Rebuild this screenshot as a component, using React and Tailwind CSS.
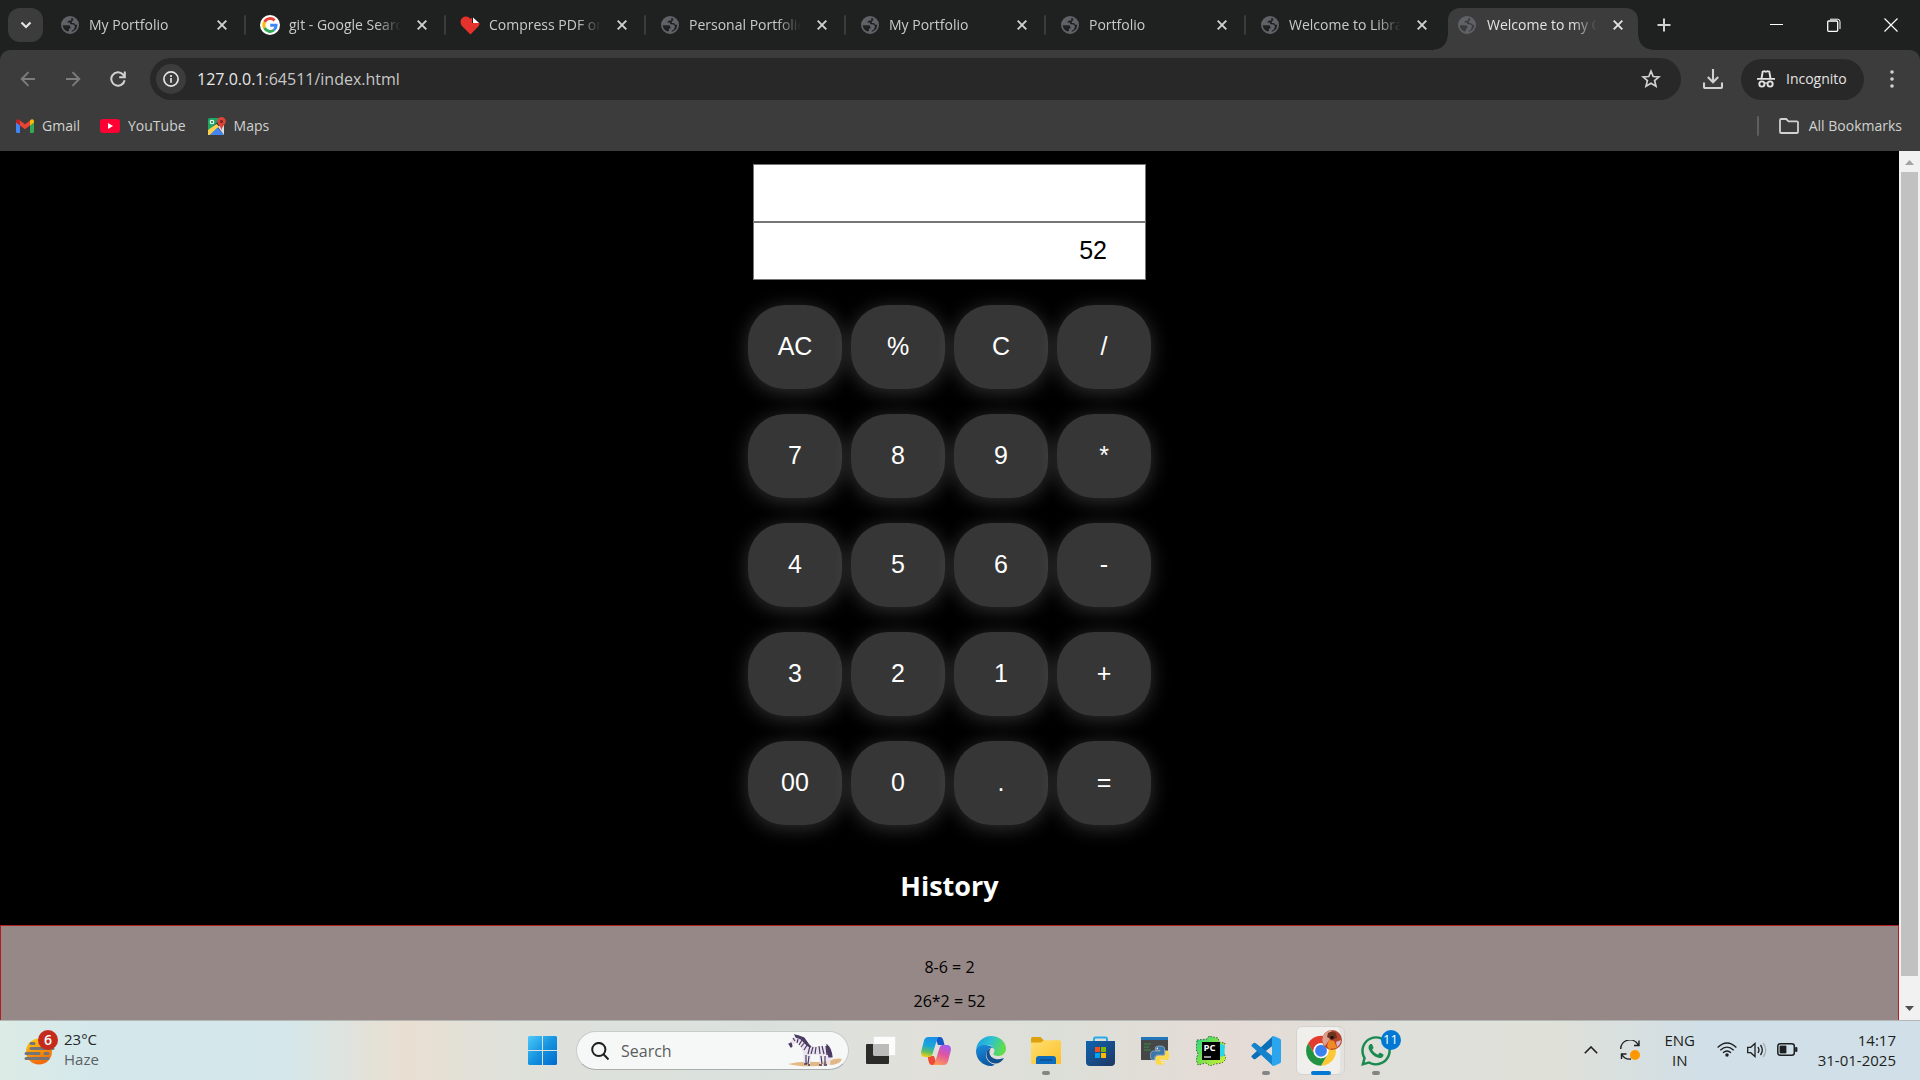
import React, { useState } from "react";
import { FaWhatsapp } from "react-icons/fa";

function Globe() {
  return (
    <svg viewBox="0 0 18 18" className="size-[18px] shrink-0" aria-hidden="true">
      <circle cx="9" cy="9" r="8.1" fill="none" stroke="#5f6368" strokeWidth="1.8" />
      <path d="M9.500 1C5 .6 1.200 4 1 8.500l1.500.7h4.800c1.500 0 2.200.9 2.200 2.200v1.200h-1.500v2l-1.500 1.200 2.500 1.500h2l-.3-2.500 2-1 .8-2 .7-1.300-1.600-2-3.100-.3-.8-1.700H6.500V5.700L8 4.500h2l.5-2z" fill="#5f6368" />
      <path d="M12.500 2l-.4 2.500-1.500 1 .5 1.600 2.200.2 1 1.500H17C17 5.500 15.200 3 12.500 2z" fill="#5f6368" />
    </svg>
  );
}

function Google() {
  return (
    <svg viewBox="0 0 20 20" className="size-5 shrink-0" aria-hidden="true">
      <circle cx="10" cy="10" r="10" fill="#fff" />
      <g fill="none" strokeWidth="2.9">
        <path d="M14.6 5.400A6.200 6.200 0 0 0 4.600 7" stroke="#ea4335" />
        <path d="M4.600 7a6.200 6.200 0 0 0 0 6" stroke="#fbbc05" />
        <path d="M4.600 13a6.200 6.200 0 0 0 9.500 2" stroke="#34a853" />
        <path d="M14.100 15a6.200 6.200 0 0 0 2-4.800H10.200" stroke="#4285f4" />
      </g>
    </svg>
  );
}

function PdfHeart() {
  return (
    <svg viewBox="0 0 20 20" className="size-5 shrink-0" aria-hidden="true">
      <path d="M10.500 19.500L2 11C-.8 7.700.6 2.200 5 1.500c2.600-.4 4.500.8 5.500 2.500L12 2.500V8h7.500c.2 1.300-.3 2.300-1 3.200z" fill="#e5322d" />
      <path d="M13 2.500l6 5.500h-6z" fill="#fff" />
    </svg>
  );
}

function Gmail() {
  return (
    <svg viewBox="0 0 18 14" className="h-[14px] w-[18px]" aria-hidden="true">
      <path d="M0 3v9.500C0 13.400.6 14 1.400 14H4V6z" fill="#4285f4" />
      <path d="M18 3v9.500c0 .9-.6 1.500-1.400 1.500H14V6z" fill="#34a853" />
      <path d="M4 1.500l5 3.800 5-3.800v5L9 10.200 4 6.500z" fill="#ea4335" />
      <path d="M0 2.200C0 .2 2-.5 3.300.8L4 1.500v5L0 3.600z" fill="#c5221f" />
      <path d="M18 2.200c0-2-2-2.700-3.300-1.400l-.7.700v5l4-2.900z" fill="#fbbc04" />
    </svg>
  );
}

function YouTube() {
  return (
    <svg viewBox="0 0 20 14" className="h-[14px] w-5" aria-hidden="true">
      <rect width="20" height="14" rx="3.2" fill="#ff0033" />
      <path d="M8 4l5 3-5 3z" fill="#fff" />
    </svg>
  );
}

function Maps() {
  return (
    <svg viewBox="0 0 18 18" className="size-[18px]" aria-hidden="true">
      <path d="M0 2.500Q0 1 1.500 1H13L0 15z" fill="#1fa463" />
      <path d="M0 13L8.500 7l2.500 2.500L2 18H0z" fill="#ffd04b" />
      <path d="M2 18l7.500-7.500L16 18z" fill="#4285f4" />
      <path d="M10 10l5-4 1 1v11z" fill="#dadce0" />
      <path d="M13.500 0a4.300 4.300 0 0 1 4.300 4.300c0 3.200-3.300 4.200-4 8.200h-.6c-.7-4-4-5-4-8.200A4.300 4.300 0 0 1 13.500 0z" fill="#db4437" />
      <circle cx="13.5" cy="4.4" r="1.5" fill="#7b231e" />
      <circle cx="4" cy="5" r="1.8" fill="none" stroke="#fff" strokeWidth="1.1" />
    </svg>
  );
}

const tabs = [
  { title: "My Portfolio", Icon: Globe },
  { title: "git - Google Search", Icon: Google },
  { title: "Compress PDF online", Icon: PdfHeart },
  { title: "Personal Portfolio", Icon: Globe },
  { title: "My Portfolio", Icon: Globe },
  { title: "Portfolio", Icon: Globe },
  { title: "Welcome to Library", Icon: Globe },
];

function Cross() {
  return (
    <svg viewBox="0 0 10 10" className="size-[10px]" fill="none" stroke="currentColor" strokeWidth="1.9" aria-hidden="true">
      <path d="M.7.700l8.600 8.600M9.300.700L.7 9.300" />
    </svg>
  );
}

const fade = "[mask-image:linear-gradient(to_right,black_calc(100%_-_24px),transparent)]";

function Tab({ title, Icon, divider }) {
  return (
    <div className="flex h-[34px] w-[200px] min-w-0 items-center pl-[13px]">
      <div className="flex w-5 shrink-0 justify-center">
        <Icon />
      </div>
      <span className={`ml-[9px] flex-1 overflow-hidden whitespace-nowrap text-sm text-[#c9cbc9] ${fade}`}>{title}</span>
      <button aria-label={`Close ${title}`} className="flex w-[43px] shrink-0 justify-center pr-px text-[#d0d2d0]">
        <Cross />
      </button>
      <span className={`mr-px h-5 w-[2px] shrink-0 rounded ${divider ? "bg-[#3c3c3c]" : "bg-transparent"}`} />
    </div>
  );
}

function TabStrip() {
  return (
    <header className="flex h-[50px] shrink-0 items-end bg-[#1f2120]">
      <button aria-label="Search tabs" className="mr-1 mb-2 ml-2 flex h-[34px] w-[35px] shrink-0 items-center justify-center rounded-xl bg-[#3c3c3c]">
        <svg viewBox="0 0 12 8" className="h-2 w-3" fill="none" stroke="#e3e3e3" strokeWidth="2.2" aria-hidden="true">
          <path d="M1.500 1.500L6 6l4.500-4.500" />
        </svg>
      </button>
      <nav className="flex min-w-0 items-end" aria-label="Tabs">
        {tabs.map((t, i) => (
          <div key={i} className="mb-2 min-w-0">
            <Tab {...t} divider={i < tabs.length - 1} />
          </div>
        ))}
        <div className="relative ml-px flex h-[42px] w-[190px] shrink-0 items-center rounded-t-xl bg-[#3c3c3c] pb-2 pl-[10px]">
          <span className="absolute bottom-0 -left-[14px] size-[14px] bg-[radial-gradient(circle_at_0_0,#1f2120_13px,#3c3c3c_14px)]" />
          <span className="absolute -right-[14px] bottom-0 size-[14px] bg-[radial-gradient(circle_at_100%_0,#1f2120_13px,#3c3c3c_14px)]" />
          <Globe />
          <span className={`ml-[11px] flex-1 overflow-hidden whitespace-nowrap text-sm text-[#e3e3e3] ${fade}`}>Welcome to my Calculator</span>
          <button aria-label="Close Welcome to my Calculator" className="flex w-[41px] shrink-0 justify-center text-[#e3e3e3]">
            <Cross />
          </button>
        </div>
      </nav>
      <button aria-label="New tab" className="mb-2 ml-[9px] flex size-[34px] shrink-0 items-center justify-center">
        <svg viewBox="0 0 14 14" className="size-[14px]" stroke="#d0d2d0" strokeWidth="2" aria-hidden="true">
          <path d="M7 .5v13M.5 7h13" />
        </svg>
      </button>
      <div className="ml-auto flex h-[50px] shrink-0 pr-px text-white">
        <button aria-label="Minimize" className="flex w-[57px] items-center justify-center pb-[2px]">
          <svg viewBox="0 0 13 13" className="size-[13px]" stroke="currentColor" aria-hidden="true">
            <path d="M0 6.500h13" />
          </svg>
        </button>
        <button aria-label="Restore" className="flex w-[57px] items-center justify-center">
          <svg viewBox="0 0 14 14" className="size-[14px]" fill="none" stroke="currentColor" aria-hidden="true">
            <rect x=".7" y="3" width="10" height="10.3" rx="1" strokeWidth="1.3" />
            <path d="M3 1.200h7.500a2.500 2.500 0 0 1 2.500 2.500V11" />
          </svg>
        </button>
        <button aria-label="Close window" className="flex w-[57px] items-center justify-center">
          <svg viewBox="0 0 14 14" className="size-[14px]" stroke="currentColor" strokeWidth="1.2" aria-hidden="true">
            <path d="M.5.500l13 13M13.500.500l-13 13" />
          </svg>
        </button>
      </div>
    </header>
  );
}

function Arrow({ flip }) {
  return (
    <svg viewBox="0 0 16 16" className={`size-4 ${flip ? "rotate-180" : ""}`} fill="none" stroke="#7c7c7c" strokeWidth="1.9" aria-hidden="true">
      <path d="M15 8H2M8.500 1.200L1.700 8l6.800 6.800" />
    </svg>
  );
}

function Toolbar() {
  return (
    <div className="shrink-0 bg-[#1f2120]">
      <div className="rounded-t-[10px] bg-[#3c3c3c] pt-2">
        <div className="flex h-[42px] items-center">
          <div className="flex w-[150px] shrink-0 pl-[5px]">
            <button aria-label="Back" className="flex w-[45px] justify-center"><Arrow /></button>
            <button aria-label="Forward" className="flex w-[45px] justify-center"><Arrow flip /></button>
            <button aria-label="Reload" className="flex w-[45px] justify-center">
              <svg viewBox="0 0 16 16" className="size-4" fill="none" stroke="#d0d2d0" strokeWidth="2" aria-hidden="true">
                <path d="M14.600 9.200A6.700 6.700 0 1 1 13 3.500l1.500 2" />
                <path d="M14.800.500v5.800H9.200" />
              </svg>
            </button>
          </div>
          <div className="flex h-[42px] flex-1 items-center rounded-full bg-[#282828] pr-5 pl-[6px]">
            <button aria-label="Site information" className="flex size-[30px] shrink-0 items-center justify-center rounded-full bg-[#3c3c3c]">
              <svg viewBox="0 0 16 16" className="size-4" fill="none" stroke="#e3e3e3" strokeWidth="1.7" aria-hidden="true">
                <circle cx="8" cy="8" r="7.1" />
                <path d="M8 7v4.800M8 4v1.900" />
              </svg>
            </button>
            <a href="#" aria-label="Address" className="ml-[11px] flex-1 text-base text-[#c7c7c7]">
              <span className="text-[#e8e8e8]">127.0.0.1</span>:64511/index.html
            </a>
            <button aria-label="Bookmark this tab">
              <svg viewBox="0 0 20 20" className="size-5" fill="none" stroke="#d0d2d0" strokeWidth="1.7" aria-hidden="true">
                <path d="M10 2.200l2.200 5.300 5.800.4-4.400 3.700 1.400 5.700-5-3.100-5 3.100 1.400-5.700L2 7.900l5.800-.4z" />
              </svg>
            </button>
          </div>
          <button aria-label="Downloads" className="ml-[22px]">
            <svg viewBox="0 0 20 20" className="size-5" fill="none" stroke="#d0d2d0" strokeWidth="2.1" aria-hidden="true">
              <path d="M10 0v13M4.800 8l5.200 5.200L15.200 8M1 13.500v4.300Q1 19 2.200 19h15.600q1.200 0 1.200-1.200v-4.300" />
            </svg>
          </button>
          <button className="ml-[18px] flex h-[41px] w-[123px] items-center rounded-full bg-[#282828] pl-4 text-sm text-[#e3e3e3]">
            <svg viewBox="0 0 18 18" className="size-[18px]" fill="none" stroke="currentColor" strokeWidth="1.9" aria-hidden="true">
              <path d="M4.500 8.500L5.700 1.700l1.700-.5 1.600.6 1.600-.6 1.700.5 1.200 6.800M0 8.900h18" />
              <circle cx="4.9" cy="14" r="2.6" />
              <circle cx="13.1" cy="14" r="2.6" />
              <path d="M7.500 13.300Q9 12.300 10.500 13.300" strokeWidth="1.3" />
            </svg>
            <span className="ml-[11px]">Incognito</span>
          </button>
          <button aria-label="Menu" className="flex w-14 justify-center">
            <svg viewBox="0 0 4 18" className="h-[18px] w-1" fill="#d0d2d0" aria-hidden="true">
              <circle cx="2" cy="2" r="1.8" /><circle cx="2" cy="9" r="1.8" /><circle cx="2" cy="16" r="1.8" />
            </svg>
          </button>
        </div>
        <div className="flex h-[51px] items-center pr-[18px] pl-4 text-sm text-[#d0d2d0]">
          <a href="#" className="flex items-center gap-2"><Gmail />Gmail</a>
          <a href="#" className="ml-5 flex items-center gap-2"><YouTube />YouTube</a>
          <a href="#" className="ml-[22px] flex items-center gap-2"><Maps />Maps</a>
          <span className="ml-auto h-5 w-[2px] rounded bg-[#5e5e5e]" />
          <button className="ml-5 flex items-center gap-[10px]">
            <svg viewBox="0 0 20 16" className="h-4 w-5" fill="none" stroke="currentColor" strokeWidth="1.8" aria-hidden="true">
              <path d="M1 2.200Q1 1 2.200 1h5L9.500 3.300h8.300q1.200 0 1.200 1.200v9.200q0 1.300-1.200 1.300H2.200Q1 15 1 13.700z" />
            </svg>
            All Bookmarks
          </button>
        </div>
      </div>
    </div>
  );
}

const keys = ["AC", "%", "C", "/", "7", "8", "9", "*", "4", "5", "6", "-", "3", "2", "1", "+", "00", "0", ".", "="];
const sans = "font-['Liberation_Sans',Arial,sans-serif]";

function Calculator() {
  const [expression, setExpression] = useState("");
  const [result, setResult] = useState("52");
  const field = `h-[58px] w-[393px] border border-[#767676] bg-white px-[38px] pb-[2px] text-right text-[25px] text-black outline-none ${sans}`;
  return (
    <main className="flex min-w-0 flex-1 flex-col items-center overflow-hidden bg-black pt-[13px]">
      <input aria-label="Expression" className={field} value={expression} onChange={(e) => setExpression(e.target.value)} />
      <input aria-label="Result" className={field} value={result} onChange={(e) => setResult(e.target.value)} />
      <div className="mt-[25px] grid grid-cols-4 gap-x-[9px] gap-y-[25px]">
        {keys.map((k) => (
          <button
            key={k}
            className={`h-[84px] w-[94px] rounded-[37px] bg-[#363636] text-[25px] text-white shadow-[0_3px_20px_rgba(255,255,255,0.2)] ${sans}`}
          >
            {k}
          </button>
        ))}
      </div>
      <h2 className="mt-[43px] text-[27px] leading-9 font-bold text-white">History</h2>
      <section className="mt-[21px] min-h-0 w-full flex-1 border border-b-0 border-[#b01e23] bg-[#968886] pt-6 text-center text-base leading-[34px] text-black">
        <p>8-6 = 2</p>
        <p>26*2 = 52</p>
      </section>
    </main>
  );
}

function Scrollbar() {
  return (
    <div className="flex w-[21px] shrink-0 flex-col items-center bg-[#f1f1f1]" aria-hidden="true">
      <svg viewBox="0 0 21 21" className="size-[21px] shrink-0"><path d="M6 14l4.500-5 4.500 5z" fill="#a3a3a3" /></svg>
      <div className="w-[17px] flex-[804] bg-[#c1c1c1]" />
      <div className="flex-[23]" />
      <svg viewBox="0 0 21 21" className="size-[21px] shrink-0"><path d="M6 7l4.500 5L15 7z" fill="#505050" /></svg>
    </div>
  );
}

function WeatherIcon() {
  return (
    <svg viewBox="0 0 36 38" className="h-[38px] w-9" aria-hidden="true">
      <defs>
        <linearGradient id="sun" x1="0" y1="0" x2="0.4" y2="1"><stop stopColor="#fcd116" /><stop offset="1" stopColor="#f26a0c" /></linearGradient>
      </defs>
      <circle cx="15" cy="21.5" r="13" fill="url(#sun)" />
      <g stroke="#757575" strokeWidth="3" strokeLinecap="round"><path d="M7 13.500h3M7 18.500h22M2 23.500h13M21 23.500h3M2 28.500h22" /></g>
      <circle cx="24" cy="10" r="10" fill="#c42b1c" />
      <text x="24" y="15" textAnchor="middle" fill="#fff" fontSize="14" fontWeight="600">6</text>
    </svg>
  );
}

function Zebra() {
  return (
    <svg viewBox="0 0 54 34" className="h-[34px] w-[54px]" aria-hidden="true">
      <path d="M0 30q12-3 28-2 10 .5 18-3 6-1 8 0-2 6-14 6-24 3-40-1z" fill="#e2b986" />
      <path d="M1 10l5-7 2-2 3 2 4 1 7 8 8 1 9-1 4 4v6l-1 9h-3l-1-9-2-2-1 11h-3l-1-10-8-1-1 10h-2l-1-9-1 10h-2l-1-13-3-6-3-5-3 3-3 2z" fill="#e9e4ee" />
      <path d="M7 1l4 1 5 2 5 7 2 2-3-1-7-7-5-2zM39 11q4 3 5 12l-3 0-2-8zM1 10l2 3 1-1-1-3zM10 5l-1 4M14 6l-3 5M17 8l-4 5M19 11l-3 5M22 12l-2 8M25 13l-2 7M28 13l-1 7M31 12l1 8M34 12l2 8M38 12l1 9M18 21v9M21 22l-1 8M33 22l1 8M37 22v8M5 4l2 3" stroke="#4b3c63" strokeWidth="1.2" fill="#4b3c63" />
      <path d="M16 30h3M20 31h2M31 31h3M36 31h3" stroke="#473a58" strokeWidth="1.6" />
    </svg>
  );
}

function StartLogo() {
  return (
    <svg viewBox="0 0 29 29" className="size-[29px]" aria-hidden="true">
      <defs><linearGradient id="win" x2="1" y2="1"><stop stopColor="#4cc9fb" /><stop offset=".5" stopColor="#1593df" /><stop offset="1" stopColor="#0069cf" /></linearGradient></defs>
      <path d="M1 0h13v14H0V1zM15 0h13l1 1v13H15zM0 15h14v14H1l-1-1zM15 15h14v13l-1 1H15z" fill="url(#win)" />
    </svg>
  );
}

function TaskView() {
  return (
    <svg viewBox="0 0 30 29" className="h-[29px] w-[30px]" aria-hidden="true">
      <rect y="8" width="23" height="20" rx="1" fill="#2b2b2a" />
      <rect x="7.5" y=".5" width="22" height="19" rx="1" fill="#fff" fillOpacity=".88" stroke="#ddd" strokeWidth=".6" />
      <path d="M7.500 8H23v11.500H7.500z" fill="#bbb" />
    </svg>
  );
}

function Copilot() {
  return (
    <svg viewBox="0 0 30 28" className="h-7 w-[30px]" aria-hidden="true">
      <defs>
        <linearGradient id="cpa" x1=".5" x2=".3" y2="1"><stop stopColor="#1a8fe8" /><stop offset=".45" stopColor="#19a8d8" /><stop offset=".75" stopColor="#5fbf62" /><stop offset="1" stopColor="#f2cf18" /></linearGradient>
        <linearGradient id="cpb" x1=".7" x2=".3" y2="1"><stop stopColor="#a65bf0" /><stop offset=".45" stopColor="#e0559f" /><stop offset="1" stopColor="#ff9a5a" /></linearGradient>
      </defs>
      <path d="M14 0h5c2 0 2.700 1.500 3.300 3.300L23.500 8H17z" fill="#1458c5" />
      <path d="M16 28h-5c-2 0-2.700-1.500-3.300-3.300L6.500 19H13z" fill="#ee4a35" />
      <path d="M7.500 0H19c-2 0-2.600 1.500-3.200 3.300L11.500 17c-.6 1.800-1.400 3-3.300 3H4C.8 20-.4 17.500.2 14.500L3 3.600C3.700 1.300 5 0 7.500 0z" fill="url(#cpa)" />
      <path d="M22.500 28H11c2 0 2.600-1.500 3.200-3.300L18.500 11c.6-1.800 1.400-3 3.300-3H26c3.200 0 4.400 2.500 3.800 5.500L27 24.400c-.7 2.300-2 3.600-4.500 3.600z" fill="url(#cpb)" />
    </svg>
  );
}

function Edge() {
  return (
    <svg viewBox="0 0 30 30" className="size-[30px]" aria-hidden="true">
      <defs>
        <linearGradient id="eda" x1="0" x2="1" y2=".3"><stop stopColor="#1a9be0" /><stop offset=".5" stopColor="#2bc0d5" /><stop offset="1" stopColor="#5fdc4e" /></linearGradient>
        <linearGradient id="edb" x2=".3" y2="1"><stop stopColor="#1a8fdc" /><stop offset="1" stopColor="#0c59a4" /></linearGradient>
      </defs>
      <path d="M.2 13C1.200 5.500 7.500 0 15 0c8.500 0 15 6 15 12.500 0 4.500-3.500 7.500-7.500 7.500-3.500 0-5.500-1.200-5-2.500.5-1 1-1.500 1-3 0-3-3-5.500-6.500-5.500C6 9 1.500 11.500.2 13z" fill="url(#eda)" />
      <path d="M0 15c0-4 5-6.500 9.500-6 5 .3 9 2.500 9 5.500 0-2-2-3-4-2.500-3 1-4.500 4-4.500 7 0 5 4 9 9 9.500-1.300.900-2.500 1.500-4 1.500C6.700 30 0 23.300 0 15z" fill="url(#edb)" />
      <path d="M10.500 16c-1 7 4 11.500 9 11.500 3.500 0 6-2 8-4.500.4-.6-.1-1-.7-.7-6 2.700-12.800-.3-13.300-5.300-.2-2 .5-3.500 1.500-4.700-2.500.5-4 2-4.500 3.700z" fill="#124f8f" />
    </svg>
  );
}

function Folder() {
  return (
    <svg viewBox="0 0 30 27" className="h-[27px] w-[30px]" aria-hidden="true">
      <defs><linearGradient id="fol" x2="1" y2="1"><stop stopColor="#ffdf70" /><stop offset="1" stopColor="#fdc02a" /></linearGradient></defs>
      <path d="M0 1.500Q0 0 1.500 0h8l3.500 3.500V8H0z" fill="#dda10b" />
      <path d="M0 5.500h10l3-2.300h15.500q1.500 0 1.500 1.500V27H1.500Q0 27 0 25.500z" fill="url(#fol)" />
      <path d="M5 22q0-3 3-3h14q3 0 3 3v5H5z" fill="#0f6cbd" />
      <path d="M9 23h12" stroke="#0a4a86" strokeWidth="1.3" />
    </svg>
  );
}

function Store() {
  return (
    <svg viewBox="0 0 29 30" className="h-[30px] w-[29px]" aria-hidden="true">
      <defs><linearGradient id="sto" x2="1" y2="1"><stop stopColor="#0f64b0" /><stop offset="1" stopColor="#1e3762" /></linearGradient></defs>
      <path d="M8 7V3q0-1.500 1.500-1.500h10Q21 1.500 21 3v4" fill="none" stroke="#29a9ea" strokeWidth="2" />
      <path d="M0 5h29v21q0 4-4 4H4q-4 0-4-4z" fill="url(#sto)" />
      <path d="M9 11h5v5H9z" fill="#f25022" /><path d="M15 11h5v5h-5z" fill="#7fba00" />
      <path d="M9 17h5v5H9z" fill="#00a4ef" /><path d="M15 17h5v5h-5z" fill="#ffb900" />
    </svg>
  );
}

const snake =
  "M14.250.180l.9.200.73.260.59.300.45.320.34.340.25.340.16.330.1.300.04.260.02.200-.01.130V8.500l-.05.630-.13.550-.21.460-.26.380-.3.310-.33.250-.35.190-.35.140-.33.100-.3.070-.26.040-.21.020H8.770l-.69.050-.59.140-.5.220-.41.270-.33.320-.27.350-.2.360-.15.370-.1.350-.07.320-.04.270-.02.210v3.060H3.170l-.21-.030-.28-.070-.32-.120-.35-.180-.36-.260-.36-.360-.35-.460-.32-.590-.28-.730-.21-.880-.14-1.050-.05-1.230.06-1.220.16-1.040.24-.870.32-.710.36-.570.4-.440.42-.330.42-.240.4-.160.36-.100.32-.050.24-.010h.160l.06.010h8.160v-.830H6.180l-.01-2.750-.02-.370.05-.340.11-.310.17-.280.25-.260.31-.230.38-.200.44-.180.51-.150.58-.120.64-.100.71-.060.77-.040.84-.020 1.270.050z";

function Python() {
  return (
    <svg viewBox="0 0 29 29" className="size-[29px]" aria-hidden="true">
      <path d="M0 1h27v23H0z" fill="#454748" />
      <path d="M0 1h27v3H0z" fill="#2076b8" />
      <path d="M3 8h7M3 11h5M3 14h7" stroke="#3c8c44" />
      <g transform="translate(9.5 10) scale(.79)">
        <path d={snake} fill="#3a78ab" stroke="#e6e6e6" strokeWidth=".6" />
        <path d={snake} transform="rotate(180 12 12)" fill="#fbd94c" stroke="#e6e6e6" strokeWidth=".6" />
        <circle cx="8.6" cy="3" r="1" fill="#fff" /><circle cx="15.4" cy="21" r="1" fill="#fff" />
      </g>
    </svg>
  );
}

function PyCharm() {
  return (
    <svg viewBox="0 0 30 30" className="size-[30px]" aria-hidden="true">
      <defs><linearGradient id="pyc" x2="1" y2=".8"><stop stopColor="#21d789" /><stop offset=".5" stopColor="#7be04a" /><stop offset="1" stopColor="#c8f03c" /></linearGradient></defs>
      <path d="M1 4l10-1 2-3 9 2 1 4 6 1-2 7 3 9-4 4-7 1-5 2-4-3-8 2-2-6 2-5-2-5z" fill="url(#pyc)" stroke="#24402a" strokeWidth=".8" strokeDasharray="1.5 1.5" />
      <path d="M23 7l6 3-1 10-5 1z" fill="#24d6e8" />
      <path d="M6 6h18v18H6z" />
      <text x="7.5" y="15" fill="#fff" fontSize="9.5" fontWeight="700">PC</text>
      <path d="M8 21h7" stroke="#fff" strokeWidth="1.2" />
    </svg>
  );
}

function VsCode() {
  return (
    <svg viewBox="0 0 30 30" className="size-[30px]" aria-hidden="true">
      <path d="M22 0L1 19.500q-1.200 1 0 2l1.700 1.500q.9.700 1.800 0L22 9.500z" fill="#0b6fb8" />
      <path d="M22 30L1 10.500q-1.200-1 0-2L2.700 7q.9-.7 1.800 0L22 20.500z" fill="#1583cc" />
      <path d="M22 .200Q23 0 24 .400l5 2.400q1 .5 1 1.700v21q0 1.200-1 1.700l-5 2.400q-1 .4-2 .2-1-.5-1-2V2.200q0-1.500 1-2z" fill="#2ba5ee" />
    </svg>
  );
}

function Chrome() {
  const blade = "M4.950 13A22 22 0 0 1 43.050 13H24A11 11 0 0 0 14.470 29.500Z";
  return (
    <svg viewBox="0 0 36 36" className="size-9" aria-hidden="true">
      <g transform="translate(-1.3 4.4) scale(.68)">
        <path d={blade} fill="#e33b2e" />
        <path d={blade} fill="#fcc934" transform="rotate(120 24 24)" />
        <path d={blade} fill="#229342" transform="rotate(240 24 24)" />
        <circle cx="24" cy="24" r="11" fill="#fff" />
        <circle cx="24" cy="24" r="8.7" fill="#3b82f0" />
      </g>
      <circle cx="26" cy="10" r="10" fill="#b5452f" />
      <path d="M17 6q3-5 9-6l-2 9-5 7q-4-4-2-10z" fill="#dca08d" />
      <path d="M22 3q4-3 8 0l1 5-5 2-5-3z" fill="#6e3420" />
      <path d="M23 10l5 1 3 7-8 1-2-3z" fill="#f08a24" />
      <path d="M30 12l5-2q-.5 5-4 7z" fill="#d9b8c4" />
      <circle cx="26" cy="7.5" r="1.8" fill="#24110e" />
    </svg>
  );
}

function WhatsApp() {
  return (
    <div className="relative">
      <FaWhatsapp className="size-[34px] text-[#1a8a50]" aria-hidden="true" />
      <span className="absolute -top-1 -right-2 flex size-5 items-center justify-center rounded-full bg-[#0078d4] text-[13px] text-white">11</span>
    </div>
  );
}

const apps = [
  { name: "Task view", Icon: TaskView },
  { name: "Copilot", Icon: Copilot },
  { name: "Edge", Icon: Edge },
  { name: "File Explorer", Icon: Folder, open: true },
  { name: "Microsoft Store", Icon: Store },
  { name: "Python", Icon: Python },
  { name: "PyCharm", Icon: PyCharm },
  { name: "Visual Studio Code", Icon: VsCode, open: true },
  { name: "Chrome", Icon: Chrome, active: true },
  { name: "WhatsApp", Icon: WhatsApp, open: true },
];

function Taskbar() {
  return (
    <footer className="grid h-[60px] shrink-0 grid-cols-[1fr_auto_1fr] items-center border-t border-[#b3b7b8] bg-[linear-gradient(to_right,#dcebe5_0%,#d4e8ec_5%,#d5e7ea_15%,#e9dfd1_21%,#dfe1da_26%,#dae1dd_40%,#e1e0da_48%,#dcdfd8_55%,#e5dbd6_64%,#dfe0da_73%,#dfe0d8_81%,#d0dfe8_89%,#d0dfe8_100%)]">
      <button className="ml-6 flex items-center justify-self-start pb-[3px] text-left text-[15px] leading-5">
        <WeatherIcon />
        <span className="ml-1 text-[#252829]">23°C<br /><span className="text-[#5c6264]">Haze</span></span>
      </button>
      <div className="flex items-center pr-[2px]">
        <button aria-label="Start" className="flex w-[55px] justify-center"><StartLogo /></button>
        <label className="mr-1 ml-[6px] flex h-[39px] w-[273px] items-center rounded-full border border-[#c8cccb] border-b-[#a9adac] bg-[#f6f8f7] pr-[6px] pl-[14px]">
          <svg viewBox="0 0 18 18" className="size-[18px] shrink-0" fill="none" stroke="#1f1f1f" strokeWidth="2" aria-hidden="true">
            <circle cx="7.8" cy="7.5" r="6.6" /><path d="M12.500 12.200l5 5.300" />
          </svg>
          <input aria-label="Search" placeholder="Search" className="mx-3 w-0 flex-1 bg-transparent text-base outline-none placeholder:text-[#5b5d5c]" />
          <Zebra />
        </label>
        {apps.map(({ name, Icon, open, active }) => (
          <button key={name} aria-label={name} className="relative flex h-[59px] w-[55px] items-center justify-center">
            {active && <span className="absolute inset-x-[3px] inset-y-[5px] rounded-md border border-[#d4d3d0] bg-[#f0efec] shadow-[inset_-5px_0_0_-1px_#e4e2df]" />}
            <span className={active ? "relative mb-[6px] ml-[7px]" : "relative"}><Icon /></span>
            {open && <span className="absolute bottom-[5px] h-1 w-2 rounded-full bg-[#858583]" />}
            {active && <span className="absolute bottom-[5px] h-1 w-5 rounded-full bg-[#0078d4]" />}
          </button>
        ))}
      </div>
      <div className="mr-6 flex items-center justify-self-end pb-[2px] text-[15px] leading-5 text-[#1d1f20]">
        <button aria-label="Show hidden icons">
          <svg viewBox="0 0 14 8" className="h-2 w-[14px]" fill="none" stroke="currentColor" strokeWidth="1.6" aria-hidden="true"><path d="M.8 7.200L7 1l6.200 6.200" /></svg>
        </button>
        <button aria-label="Updates" className="ml-[22px]">
          <svg viewBox="0 0 20 20" className="size-5" fill="none" stroke="currentColor" strokeWidth="1.4" aria-hidden="true">
            <path d="M.7 9A9.300 9.300 0 0 1 18.300 5M19 .5V5.500h-5M1.500 19v-5h5M1.800 14.500A9 9 0 0 0 11 19" />
            <circle cx="15" cy="15" r="5" fill="#ff9800" stroke="none" />
          </svg>
        </button>
        <button className="ml-6 w-[32px] text-center">ENG<br />IN</button>
        <button aria-label="Network, volume and battery" className="ml-[21px] flex items-center gap-[10px]">
          <svg viewBox="0 0 20 15" className="h-[15px] w-5" fill="none" stroke="currentColor" strokeWidth="1.3" aria-hidden="true">
            <path d="M.6 5.500Q10-3.500 19.400 5.500M3.300 8.200q6.700-6.200 13.400 0M6 10.700q4-3.400 8 0" /><circle cx="10" cy="13" r="1.7" fill="currentColor" stroke="none" />
          </svg>
          <svg viewBox="0 0 20 16" className="h-4 w-5" fill="none" stroke="currentColor" strokeWidth="1.3" aria-hidden="true">
            <path d="M.7 5.300h3L8 1.500v13l-4.300-3.800h-3zM11 5q2 3 0 6M13.500 3q3.600 5 0 10" /><path d="M16.200 1q5 7 0 14" stroke="#a7afb3" />
          </svg>
          <svg viewBox="0 0 21 13" className="h-[13px] w-[21px]" fill="none" stroke="currentColor" strokeWidth="1.5" aria-hidden="true">
            <rect x=".8" y=".8" width="16.5" height="11.4" rx="2.5" /><path d="M3 3h6v7H3zM18.500 4.500v4h1.500v-4z" fill="currentColor" strokeWidth=".8" />
          </svg>
        </button>
        <button className="ml-5 text-right">14:17<br />31-01-2025</button>
      </div>
    </footer>
  );
}

export default function App() {
  return (
    <div className="flex h-screen flex-col overflow-hidden bg-black font-['Open_Sans','Noto_Sans',sans-serif]">
      <TabStrip />
      <Toolbar />
      <div className="flex min-h-0 flex-1">
        <Calculator />
        <Scrollbar />
      </div>
      <Taskbar />
    </div>
  );
}
